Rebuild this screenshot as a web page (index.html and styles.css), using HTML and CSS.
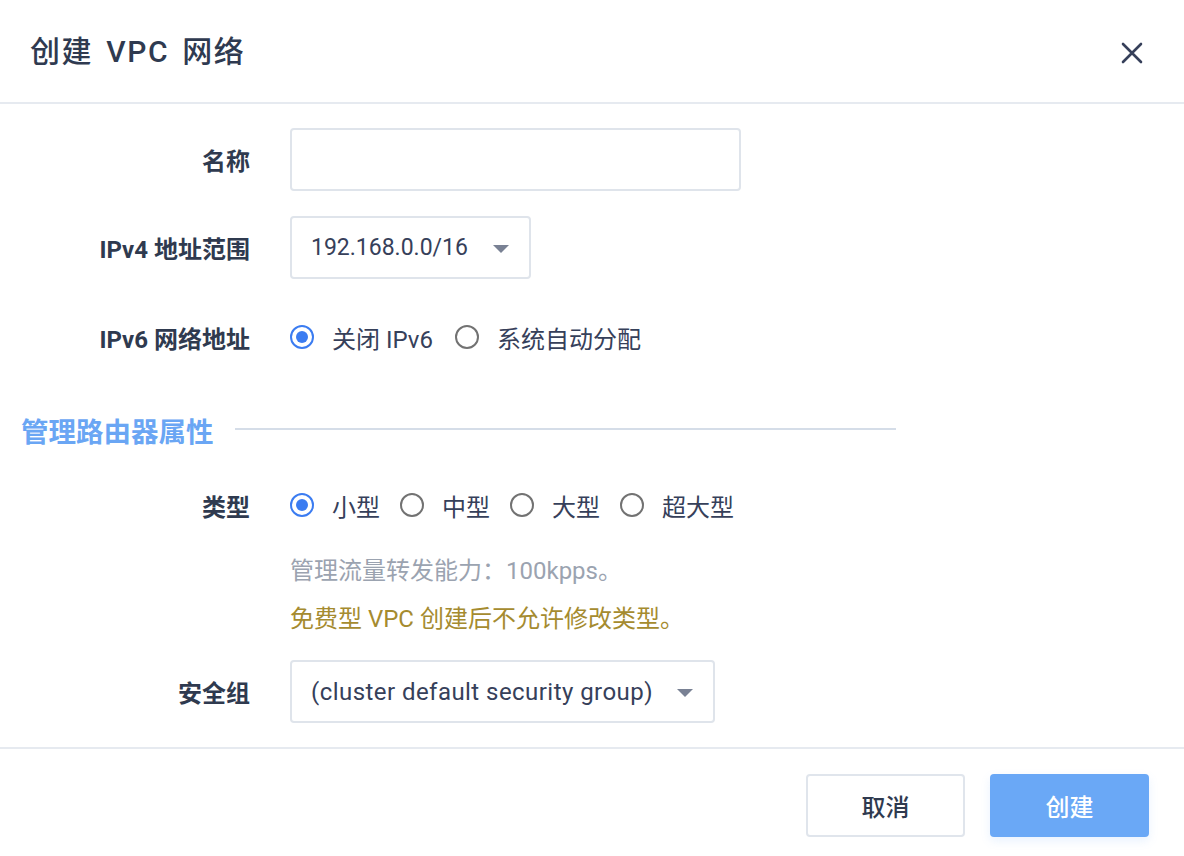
FILE: index.html
```html
<!DOCTYPE html>
<html lang="zh-CN">
<head>
<meta charset="utf-8">
<title>创建 VPC 网络</title>
<link rel="stylesheet" href="styles.css">
</head>
<body>
<div class="modal">
  <header class="modal-header">
    <h1 class="modal-title">创建 VPC 网络</h1>
    <button class="close-btn" aria-label="关闭">
      <svg width="22" height="22" viewBox="0 0 22 22"><path d="M2 2 L20 20 M20 2 L2 20" stroke="#36405a" stroke-width="2.6" stroke-linecap="round" fill="none"/></svg>
    </button>
  </header>

  <div class="modal-body">
    <div class="form-row row-name">
      <label class="form-label">名称</label>
      <div class="form-control"><input class="text-input" type="text"></div>
    </div>

    <div class="form-row row-ipv4">
      <label class="form-label">IPv4 地址范围</label>
      <div class="form-control">
        <div class="select select-cidr"><span class="select-value">192.168.0.0/16</span><span class="select-arrow"></span></div>
      </div>
    </div>

    <div class="form-row row-ipv6">
      <label class="form-label">IPv6 网络地址</label>
      <div class="form-control radio-group radio-group-wide">
        <span class="radio-item"><span class="radio checked"></span><span class="radio-text">关闭 IPv6</span></span>
        <span class="radio-item"><span class="radio"></span><span class="radio-text">系统自动分配</span></span>
      </div>
    </div>

    <div class="section-head">
      <h2 class="section-title">管理路由器属性</h2>
      <span class="section-line"></span>
    </div>

    <div class="form-row row-type">
      <label class="form-label">类型</label>
      <div class="form-control radio-group">
        <span class="radio-item"><span class="radio checked"></span><span class="radio-text">小型</span></span>
        <span class="radio-item"><span class="radio"></span><span class="radio-text">中型</span></span>
        <span class="radio-item"><span class="radio"></span><span class="radio-text">大型</span></span>
        <span class="radio-item"><span class="radio"></span><span class="radio-text">超大型</span></span>
      </div>
    </div>

    <div class="form-row row-hint">
      <span class="form-label"></span>
      <p class="form-help">管理流量转发能力：100kpps。</p>
    </div>

    <div class="form-row row-warn">
      <span class="form-label"></span>
      <p class="form-warn">免费型 VPC 创建后不允许修改类型。</p>
    </div>

    <div class="form-row row-sg">
      <label class="form-label">安全组</label>
      <div class="form-control">
        <div class="select select-sg"><span class="select-value select-value-latin">(cluster default security group)</span><span class="select-arrow"></span></div>
      </div>
    </div>
  </div>

  <footer class="modal-footer">
    <button class="btn btn-default">取消</button>
    <button class="btn btn-primary">创建</button>
  </footer>
</div>
</body>
</html>
```

FILE: styles.css
```css
* { box-sizing: border-box; }

html, body {
  margin: 0;
  padding: 0;
  background: #ffffff;
}

body {
  font-family: Roboto, "Noto Sans CJK SC", sans-serif;
  color: #36405a;
  width: 1184px;
  height: 856px;
  overflow: hidden;
}

.modal {
  width: 1184px;
  height: 856px;
  display: flex;
  flex-direction: column;
}

/* header */
.modal-header {
  height: 104px;
  border-bottom: 2px solid #e6eaf0;
  display: flex;
  align-items: center;
  justify-content: space-between;
  padding: 0 41px 5px 30px;
}

.modal-title {
  margin: 0;
  font-size: 30px;
  font-weight: 500;
  color: #2f3a50;
  letter-spacing: 1.6px;
  word-spacing: 4px;
}

.close-btn {
  border: 0;
  background: transparent;
  padding: 0;
  width: 22px;
  height: 22px;
  margin-top: 8px;
  display: flex;
}

/* body */
.modal-body {
  padding: 24px 0 24px;
  border-bottom: 2px solid #e6eaf0;
}

.form-row {
  display: grid;
  grid-template-columns: 250px 1fr;
  column-gap: 40px;
  align-items: center;
}

.form-label {
  text-align: right;
  font-size: 24px;
  font-weight: 700;
  color: #2f3a4f;
}

.form-control {
  display: flex;
  align-items: center;
}

.row-name { height: 63px; }
.row-ipv4 { height: 63px; margin-top: 25px; }
.row-ipv6 { height: 40px; margin-top: 38px; }
.row-type { height: 40px; margin-top: 35px; }
.row-hint { height: 32px; margin-top: 30px; }
.row-warn { height: 32px; margin-top: 16px; }
.row-sg   { height: 63px; margin-top: 25px; }

.text-input {
  width: 451px;
  height: 63px;
  border: 2px solid #dfe4eb;
  border-radius: 4px;
  background: #fff;
  outline: none;
  font: inherit;
}

.select {
  height: 63px;
  border: 2px solid #dfe4eb;
  border-radius: 4px;
  background: #fff;
  display: flex;
  align-items: center;
  justify-content: space-between;
  padding: 0 20px 0 19px;
  font-size: 23px;
  color: #36405a;
}

.select-cidr { width: 241px; }
.select-sg { width: 425px; }

.select-value-latin {
  font-size: 24px;
  letter-spacing: 0.45px;
}

.select-arrow {
  width: 0;
  height: 0;
  border-left: 8px solid transparent;
  border-right: 8px solid transparent;
  border-top: 8px solid #798194;
  margin-top: 2px;
}

/* radios */
.radio-group {
  gap: 20px;
}

.radio-group-wide {
  gap: 22px;
}

.radio-item {
  display: flex;
  align-items: center;
  gap: 18px;
}

.radio {
  width: 24px;
  height: 24px;
  border-radius: 50%;
  border: 2px solid #727272;
  display: flex;
  align-items: center;
  justify-content: center;
  flex: none;
}

.radio.checked {
  border-color: #3b7cf1;
}

.radio.checked::after {
  content: "";
  width: 12px;
  height: 12px;
  border-radius: 50%;
  background: #3b7cf1;
}

.radio-text {
  font-size: 24px;
  color: #36405a;
}

/* section */
.section-head {
  width: 896px;
  height: 40px;
  margin-top: 53px;
  padding-left: 21px;
  display: flex;
  align-items: center;
  gap: 21px;
}

.section-title {
  margin: 0;
  font-size: 27.5px;
  font-weight: 700;
  color: #6aa6f4;
  white-space: nowrap;
}

.section-line {
  flex: 1;
  height: 2px;
  background: #d5dde8;
  margin-top: -2px;
}

.form-help,
.form-warn {
  margin: 0;
  font-size: 24px;
  line-height: 32px;
}

.form-help { color: #9ba3b0; }
.form-warn { color: #a58b2f; }

/* footer */
.modal-footer {
  flex: 1;
  display: flex;
  justify-content: flex-end;
  align-items: flex-start;
  gap: 25px;
  padding: 25px 35px 0 0;
}

.btn {
  width: 159px;
  height: 63px;
  border-radius: 4px;
  font-family: inherit;
  font-size: 24px;
  font-weight: 500;
  cursor: pointer;
}

.btn-default {
  background: #fff;
  border: 2px solid #e0e5ec;
  color: #2f3a4f;
}

.btn-primary {
  background: #6aa8f6;
  border: 0;
  color: #fff;
  box-shadow: 0 4px 10px rgba(106, 168, 246, 0.15);
}
```
